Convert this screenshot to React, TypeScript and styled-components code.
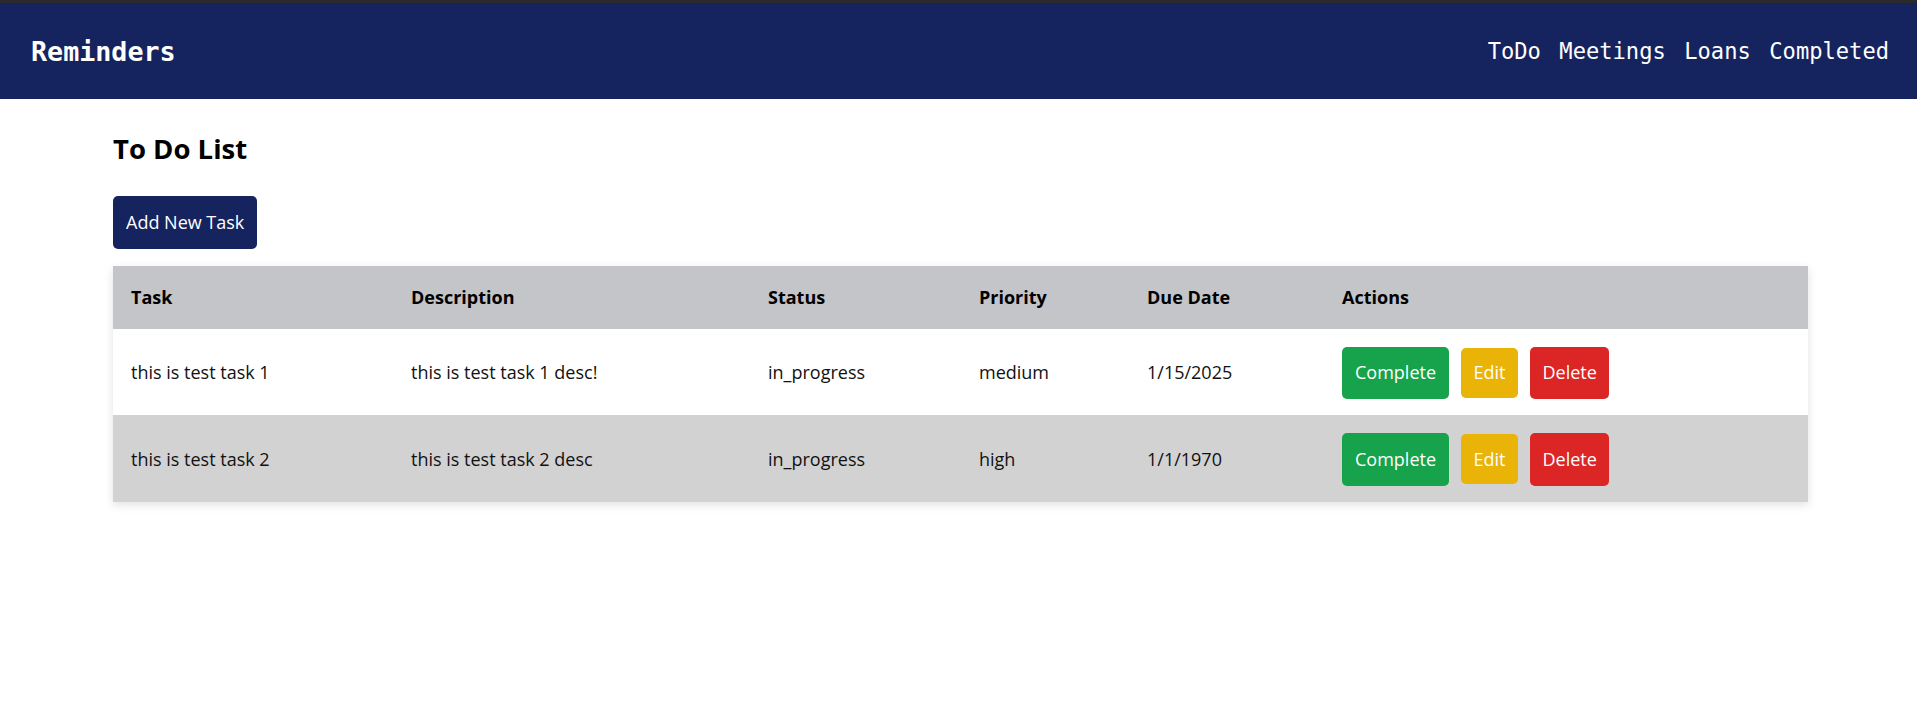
import React from "react";
import styled, { createGlobalStyle } from "styled-components";

const GlobalStyle = createGlobalStyle`
  html, body {
    margin: 0;
    padding: 0;
    background: #ffffff;
  }
  body {
    font-family: "Open Sans", "Noto Sans", sans-serif;
    color: #111111;
  }
  * { box-sizing: border-box; }
`;

const NavBar = styled.nav`
  display: flex;
  align-items: center;
  justify-content: space-between;
  height: 99px;
  padding: 0 28px 0 31px;
  background: #15245f;
  border-top: 3px solid #2b2b2d;
  font-family: "DejaVu Sans Mono", "Liberation Mono", monospace;
  color: #ffffff;
`;

const Brand = styled.div`
  font-size: 26.7px;
  font-weight: 700;
`;

const NavLinks = styled.ul`
  display: flex;
  gap: 18.5px;
  margin: 0;
  padding: 0;
  list-style: none;
`;

const NavLink = styled.li`
  font-size: 22.1px;
  color: #ffffff;
  cursor: pointer;
`;

const Main = styled.main`
  display: flex;
  flex-direction: column;
  align-items: flex-start;
  padding: 32px 109px 40px 113px;
`;

const Title = styled.h2`
  margin: 0 0 29px;
  font-size: 27.5px;
  line-height: 36px;
  font-weight: 700;
  color: #000000;
`;

type Variant = "primary" | "complete" | "edit" | "delete";

const colors: Record<Variant, string> = {
  primary: "#15245f",
  complete: "#17a34b",
  edit: "#eab308",
  delete: "#dc2626",
};

const Button = styled.button<{ $variant: Variant }>`
  display: inline-flex;
  align-items: center;
  justify-content: center;
  height: ${(p) => (p.$variant === "edit" ? "50px" : "52.5px")};
  padding: 0 ${(p) => (p.$variant === "edit" || p.$variant === "delete" ? "12.5px" : "13px")};
  border: none;
  border-radius: 5px;
  background: ${(p) => colors[p.$variant]};
  color: #ffffff;
  font-family: "Open Sans", "Noto Sans", sans-serif;
  font-size: 18px;
  line-height: 25px;
  cursor: pointer;
`;

const TableCard = styled.div`
  width: 100%;
  margin-top: 17px;
  box-shadow: 0 3px 9px rgba(0, 0, 0, 0.12);
`;

const Table = styled.table`
  width: 100%;
  border-collapse: collapse;
  table-layout: fixed;
`;

const HeadRow = styled.tr`
  background: #c4c5c8;
`;

const Th = styled.th`
  padding: 19px 18px;
  text-align: left;
  font-size: 18px;
  line-height: 25px;
  font-weight: 700;
  color: #000000;
`;

const Row = styled.tr<{ $alt: boolean }>`
  background: ${(p) => (p.$alt ? "#d3d2d3" : "#ffffff")};
`;

const Td = styled.td`
  padding: 18px 18px 16px;
  height: 86.5px;
  font-size: 18px;
  line-height: 25px;
  color: #111111;
  vertical-align: middle;
`;

const Actions = styled.div`
  display: flex;
  align-items: center;
  gap: 12px;
`;

const tasks = [
  {
    task: "this is test task 1",
    description: "this is test task 1 desc!",
    status: "in_progress",
    priority: "medium",
    due: "1/15/2025",
  },
  {
    task: "this is test task 2",
    description: "this is test task 2 desc",
    status: "in_progress",
    priority: "high",
    due: "1/1/1970",
  },
];

const colWidths = [280, 357, 211, 168, 195];

export default function App() {
  return (
    <>
      <GlobalStyle />
      <NavBar>
        <Brand>Reminders</Brand>
        <NavLinks>
          <NavLink>ToDo</NavLink>
          <NavLink>Meetings</NavLink>
          <NavLink>Loans</NavLink>
          <NavLink>Completed</NavLink>
        </NavLinks>
      </NavBar>
      <Main>
        <Title>To Do List</Title>
        <Button $variant="primary">Add New Task</Button>
        <TableCard>
          <Table>
            <colgroup>
              {colWidths.map((w, i) => (
                <col key={i} style={{ width: w }} />
              ))}
              <col />
            </colgroup>
            <thead>
              <HeadRow>
                <Th>Task</Th>
                <Th>Description</Th>
                <Th>Status</Th>
                <Th>Priority</Th>
                <Th>Due Date</Th>
                <Th>Actions</Th>
              </HeadRow>
            </thead>
            <tbody>
              {tasks.map((t, i) => (
                <Row key={i} $alt={i % 2 === 1}>
                  <Td>{t.task}</Td>
                  <Td>{t.description}</Td>
                  <Td>{t.status}</Td>
                  <Td>{t.priority}</Td>
                  <Td>{t.due}</Td>
                  <Td>
                    <Actions>
                      <Button $variant="complete">Complete</Button>
                      <Button $variant="edit">Edit</Button>
                      <Button $variant="delete">Delete</Button>
                    </Actions>
                  </Td>
                </Row>
              ))}
            </tbody>
          </Table>
        </TableCard>
      </Main>
    </>
  );
}
